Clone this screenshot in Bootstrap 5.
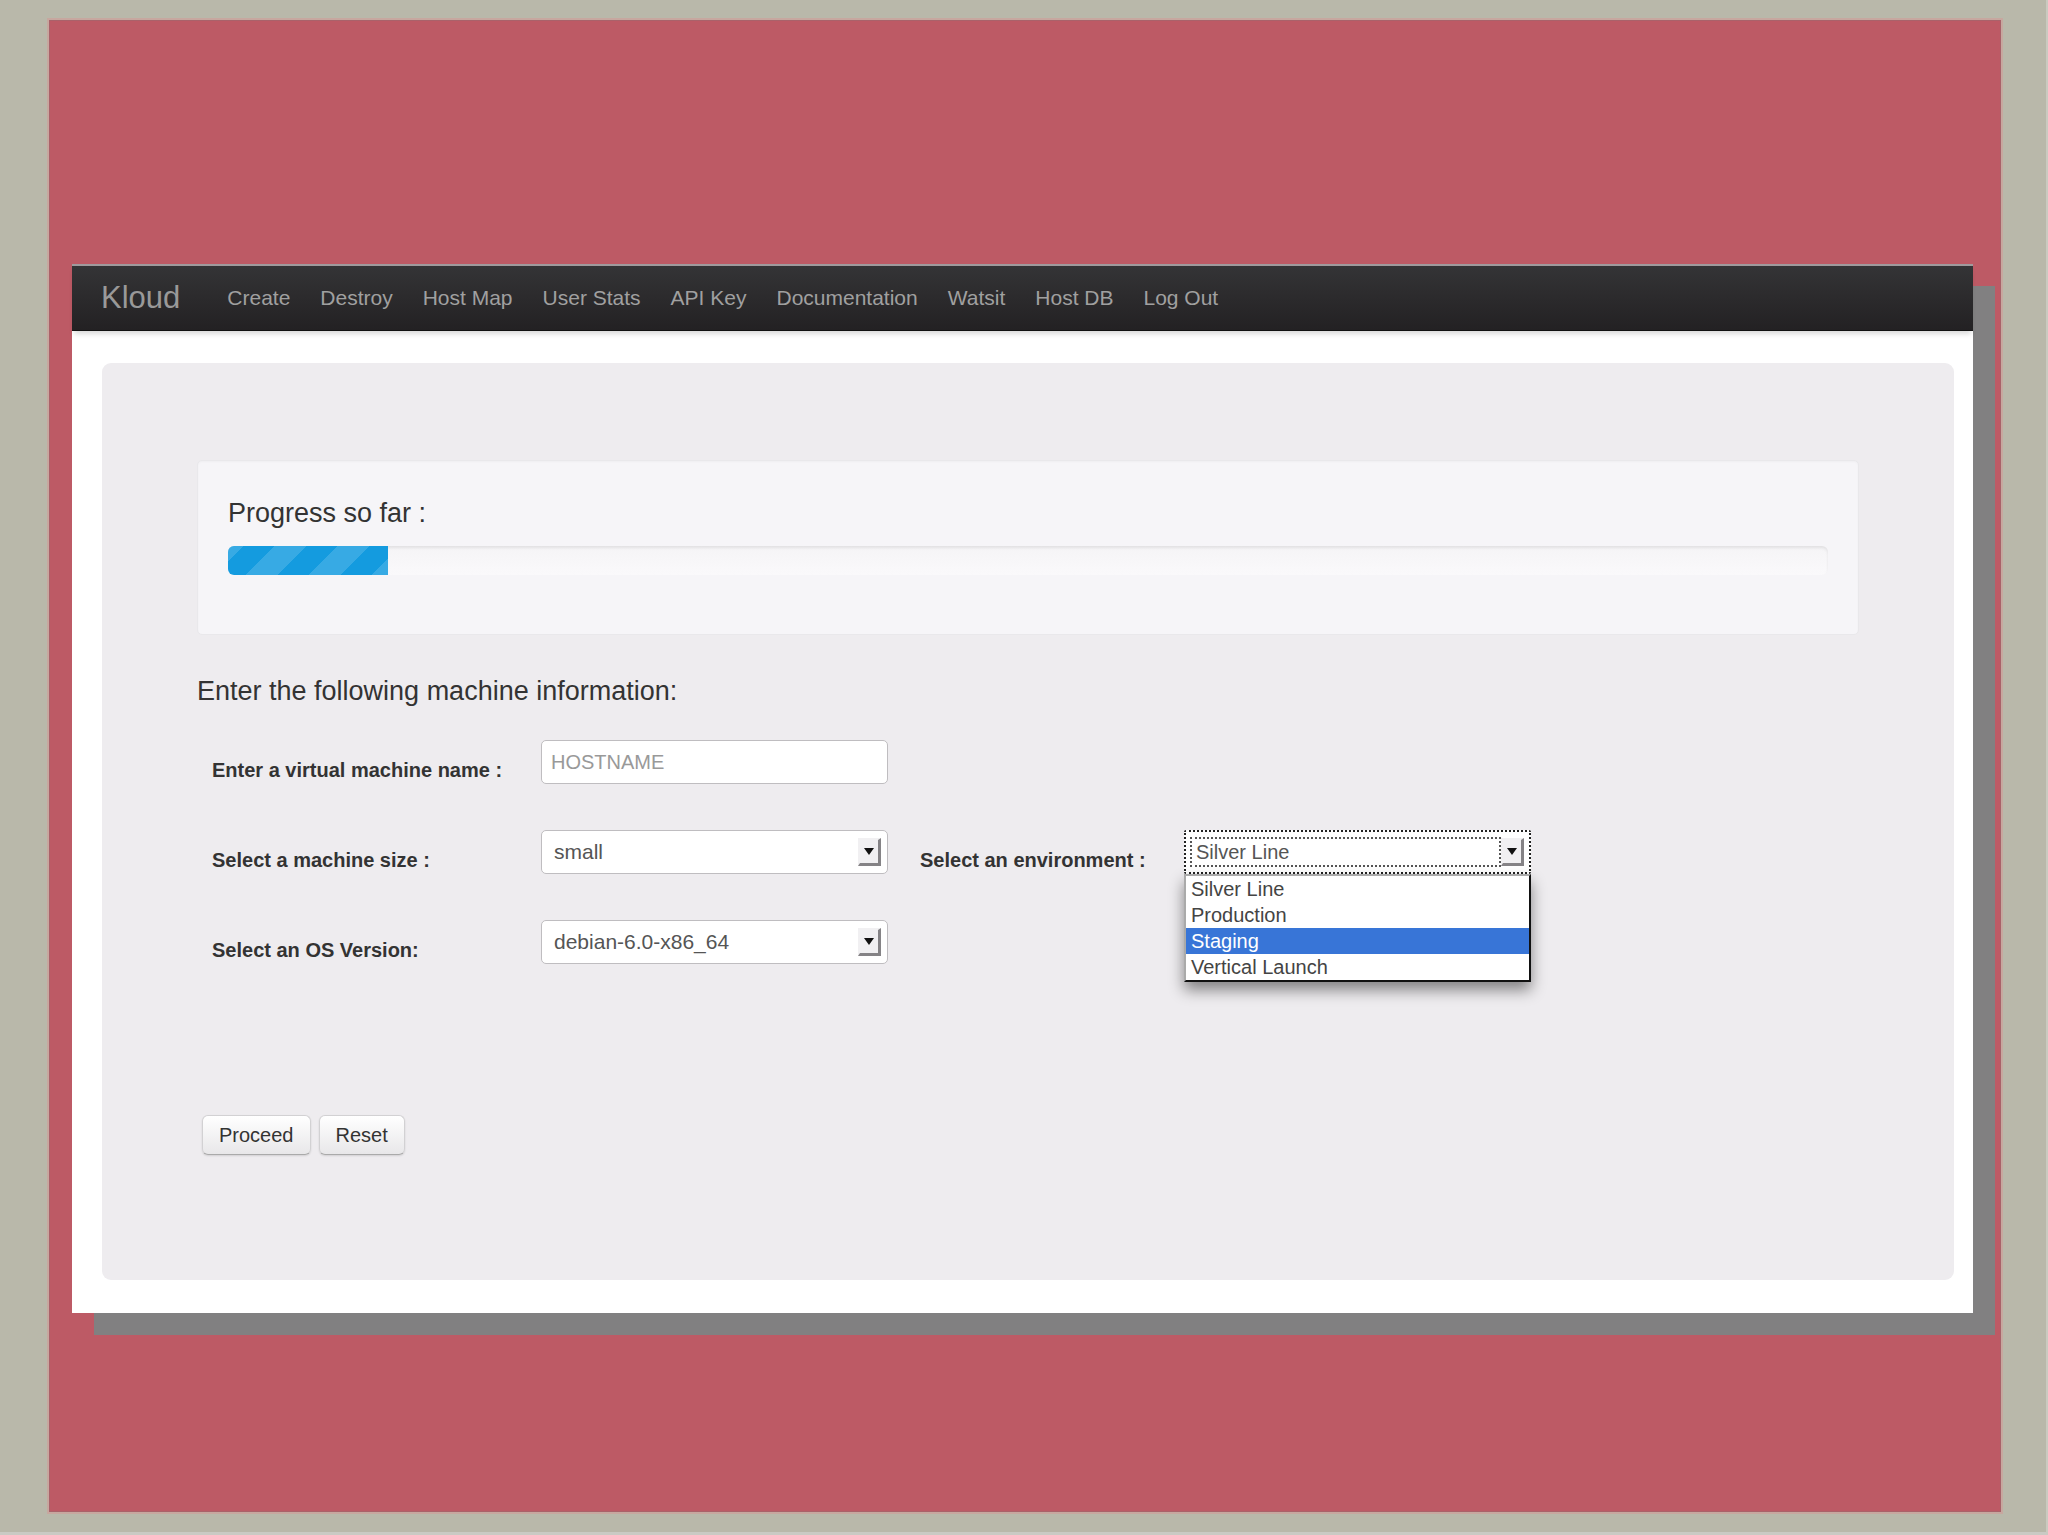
<!DOCTYPE html>
<html lang="en">
<head>
<meta charset="utf-8">
<meta name="viewport" content="width=device-width, initial-scale=1">
<title>Kloud</title>
<link href="https://cdn.jsdelivr.net/npm/bootstrap@5.3.0/dist/css/bootstrap.min.css" rel="stylesheet">
<style>
  body { background: #b9b8aa; font-family: "Liberation Sans", Arial, sans-serif; font-size: 20px; line-height: 26px; color: #333; }
  .page-frame { min-height: 100vh; padding: 20px 45px 20px 49px; border-right: 2px solid #cacac0; border-bottom: 3px solid #cacac4; }
  .slide { background: #bd5a65; border: 1px solid #a9626a; outline: 2px solid #c7a79f; padding: 243px 27px 0 22px; }
  .app-window { background: #fff; box-shadow: 22px 22px 0 #818081; padding-bottom: 33px; }
  .app-nav { background: linear-gradient(#343436, #232123); border-top: 2px solid #a09a9d; border-bottom: 1px solid #111; box-shadow: 0 5px 5px -2px rgba(0,0,0,.15); padding: 0 29px; height: 67px; }
  .app-nav .navbar-brand { font-size: 31px; line-height: 40px; color: #999; margin-right: 32px; padding: 0; }
  .app-nav .navbar-nav .nav-link { font-size: 21px; line-height: 32px; color: #a0a0a0; padding: 0 15px; }
  .app-nav .navbar-nav .nav-link:hover { color: #fff; }
  .hero { background: #eeecef; border-radius: 9px; margin: 32px 19px 0 30px; padding: 97px 95px 125px; }
  .well { background: #f6f5f8; border: 1px solid #e9e8eb; border-radius: 5px; box-shadow: inset 0 1px 2px rgba(0,0,0,.03); padding: 36px 30px 59px; }
  .title { font-size: 27px; line-height: 32px; font-weight: 400; margin: 0; }
  .meter { height: 29px; border-radius: 6px; background: linear-gradient(#f5f4f6, #faf9fb); box-shadow: inset 0 2px 3px rgba(0,0,0,.08); margin-top: 17px; }
  .meter .progress-bar { background-color: #149bdf; background-image: linear-gradient(135deg, rgba(255,255,255,.15) 25%, transparent 25%, transparent 50%, rgba(255,255,255,.15) 50%, rgba(255,255,255,.15) 75%, transparent 75%, transparent); background-size: 63px 63px; background-position: -16px 0; }
  .form-lines { margin: 33px 0 0 15px; row-gap: 46px; }
  .line { min-height: 44px; }
  .line label { font-size: 20px; font-weight: 700; line-height: 28px; padding-top: 16px; }
  .label-main { width: 329px; }
  .label-env { width: 264px; margin-left: 32px; }
  .field { width: 347px; height: 44px; font-size: 21px; line-height: 26px; color: #555; background-color: #fff; border: 1px solid #bfbdc0; border-radius: 5px; padding: 0 9px; }
  .field::placeholder { color: #999; font-size: 20px; opacity: 1; }
  select.field { appearance: none; padding: 0 40px 0 12px; background: #fff url("data:image/svg+xml,%3Csvg xmlns='http://www.w3.org/2000/svg' width='23' height='28'%3E%3Cpath fill='%23f1f0f2' d='M0 0h23v28H0z'/%3E%3Cpath fill='%23858386' d='M23 0v28H0l2-3h18V2z'/%3E%3Cpath fill='%23111' d='M6 10h10l-5 7z'/%3E%3C/svg%3E") no-repeat right 6px center; }
  .pick { width: 347px; }
  select.field.open { border: 2px dotted #222; font-size: 20px; border-radius: 2px; padding-left: 10px; background-position: right 5px center; }
  .pick::before { content: ""; position: absolute; top: 7px; left: 6px; right: 30px; height: 30px; border: 2px dotted #555; pointer-events: none; }
  .options { position: absolute; top: 44px; left: 0; width: 100%; background: #fff; border: 2px solid; border-color: #aaa #111 #111 #aaa; box-shadow: 0 8px 14px rgba(0,0,0,.45); color: #444; z-index: 2; }
  .options li { padding: 0 5px; }
  .options .chosen { background: #3875d7; color: #fff; }
  .btn-plain { font-size: 20px; line-height: 26px; color: #333; padding: 6px 16px; border: 1px solid #d2d1d3; border-bottom-color: #aaa; border-radius: 6px; background: linear-gradient(#fff, #e8e7e9); box-shadow: 0 1px 2px rgba(0,0,0,.12); }
  .actions { margin: 151px 0 0 5px; gap: 8px; }
</style>
<script src="https://cdn.jsdelivr.net/npm/bootstrap@5.3.0/dist/js/bootstrap.bundle.min.js"></script>
</head>
<body>
<div class="page-frame d-flex flex-column">
  <div class="slide flex-grow-1">
    <div class="app-window">
      <nav class="app-nav navbar navbar-expand">
        <a class="navbar-brand" href="#">Kloud</a>
        <div class="navbar-nav">
          <a class="nav-link" href="#">Create</a>
          <a class="nav-link" href="#">Destroy</a>
          <a class="nav-link" href="#">Host Map</a>
          <a class="nav-link" href="#">User Stats</a>
          <a class="nav-link" href="#">API Key</a>
          <a class="nav-link" href="#">Documentation</a>
          <a class="nav-link" href="#">Watsit</a>
          <a class="nav-link" href="#">Host DB</a>
          <a class="nav-link" href="#">Log Out</a>
        </div>
      </nav>
      <main class="hero">
        <section class="well">
          <h1 class="title">Progress so far :</h1>
          <div class="progress meter" role="progressbar" aria-label="Progress" aria-valuenow="10" aria-valuemin="0" aria-valuemax="100">
            <div class="progress-bar" style="width: 10%"></div>
          </div>
        </section>
        <form>
          <h2 class="title mt-4 pt-3">Enter the following machine information:</h2>
          <div class="form-lines d-flex flex-column">
            <div class="line d-flex">
              <label class="label-main" for="hostname">Enter a virtual machine name :</label>
              <input class="field" id="hostname" type="text" placeholder="HOSTNAME">
            </div>
            <div class="line d-flex">
              <label class="label-main" for="size">Select a machine size :</label>
              <select class="field" id="size"><option>small</option></select>
              <label class="label-env" for="env">Select an environment :</label>
              <div class="pick position-relative">
                <select class="field open" id="env"><option>Silver Line</option><option>Production</option><option>Staging</option><option>Vertical Launch</option></select>
                <ul class="options list-unstyled m-0">
                  <li>Silver Line</li>
                  <li>Production</li>
                  <li class="chosen">Staging</li>
                  <li>Vertical Launch</li>
                </ul>
              </div>
            </div>
            <div class="line d-flex">
              <label class="label-main" for="os">Select an OS Version:</label>
              <select class="field" id="os"><option>debian-6.0-x86_64</option></select>
            </div>
          </div>
          <div class="actions d-flex">
            <button class="btn btn-plain" type="submit">Proceed</button>
            <button class="btn btn-plain" type="reset">Reset</button>
          </div>
        </form>
      </main>
    </div>
  </div>
</div>
</body>
</html>
